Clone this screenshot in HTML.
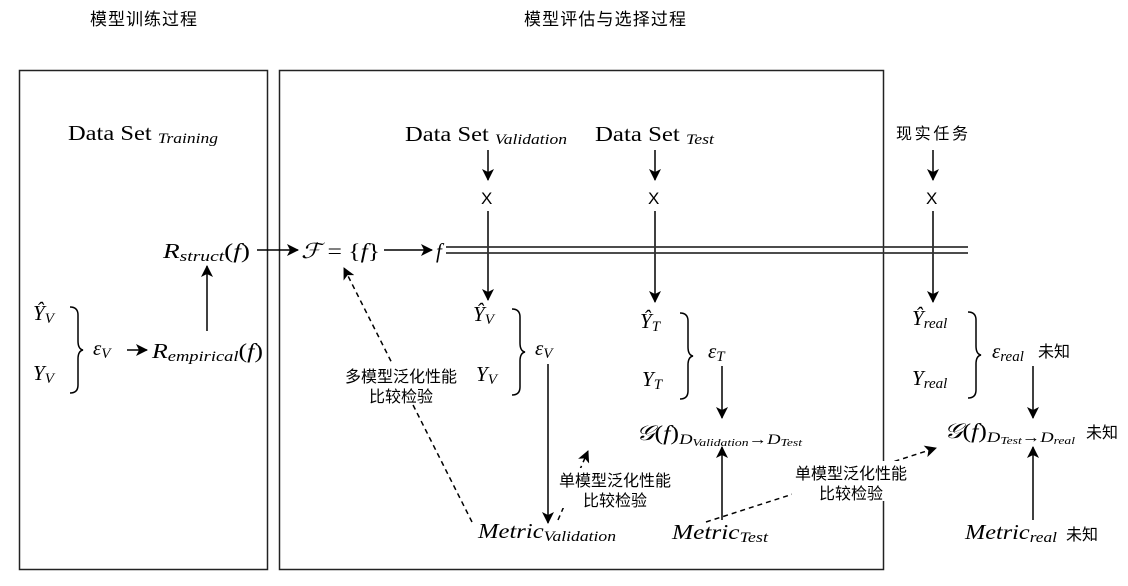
<!DOCTYPE html>
<html><head><meta charset="utf-8"><style>
html,body{margin:0;padding:0;background:#fff;width:1128px;height:586px;overflow:hidden}
svg{display:block}
.m{font-family:"Liberation Serif",serif;font-style:italic;font-size:21px;fill:#000}
.r{font-family:"Liberation Serif",serif;font-size:21px;fill:#000}
.s{font-size:15px}
.c{font-family:"Liberation Sans","Noto Sans CJK SC",sans-serif;font-size:16px;fill:#000}
.t{font-family:"Liberation Sans","Noto Sans CJK SC",sans-serif;font-size:17px;fill:#000}
.x{font-family:"Liberation Sans",sans-serif;font-size:17px;fill:#000}
</style></head><body>
<svg width="1128" height="586" viewBox="0 0 1128 586" xmlns="http://www.w3.org/2000/svg">
<defs>
<marker id="b" markerWidth="12" markerHeight="12" refX="11" refY="6" orient="auto" markerUnits="userSpaceOnUse"><path d="M0,0 L12,6 L0,12 L3,6 z" fill="#000"/></marker>
</defs>
<text class="t" x="90" y="25" textLength="107">模型训练过程</text>
<text class="t" x="524" y="25" textLength="162">模型评估与选择过程</text>
<rect x="19.5" y="70.5" width="248" height="499" fill="none" stroke="#222" stroke-width="1.5"/>
<rect x="279.5" y="70.5" width="604" height="499" fill="none" stroke="#222" stroke-width="1.5"/>

<text class="r" x="68" y="140" textLength="150" lengthAdjust="spacingAndGlyphs">Data Set <tspan class="m s" dy="3">Training</tspan></text>
<text class="r" x="405" y="141" textLength="162" lengthAdjust="spacingAndGlyphs">Data Set <tspan class="m s" dy="3">Validation</tspan></text>
<text class="r" x="595" y="141" textLength="119" lengthAdjust="spacingAndGlyphs">Data Set <tspan class="m s" dy="3">Test</tspan></text>
<text class="c" x="896" y="139" textLength="72">现实任务</text>

<g stroke="#000" stroke-width="1.5" fill="none">
<line x1="488" y1="150" x2="488" y2="180" marker-end="url(#b)"/>
<line x1="655" y1="150" x2="655" y2="180" marker-end="url(#b)"/>
<line x1="933" y1="150" x2="933" y2="180" marker-end="url(#b)"/>
<line x1="488" y1="211" x2="488" y2="300" marker-end="url(#b)"/>
<line x1="655" y1="211" x2="655" y2="302" marker-end="url(#b)"/>
<line x1="933" y1="211" x2="933" y2="302" marker-end="url(#b)"/>
<line x1="446" y1="247" x2="968" y2="247" stroke="#333" stroke-width="1.8"/>
<line x1="446" y1="253" x2="968" y2="253" stroke="#333" stroke-width="1.8"/>
<line x1="257" y1="250" x2="298" y2="250" marker-end="url(#b)"/>
<line x1="384" y1="250" x2="432" y2="250" marker-end="url(#b)"/>
<line x1="207" y1="331" x2="207" y2="266" marker-end="url(#b)"/>
<line x1="127" y1="350" x2="147" y2="350" marker-end="url(#b)"/>
<line x1="548" y1="364" x2="548" y2="523" marker-end="url(#b)"/>
<line x1="722" y1="366" x2="722" y2="418" marker-end="url(#b)"/>
<line x1="722" y1="520" x2="722" y2="447" marker-end="url(#b)"/>
<line x1="1033" y1="366" x2="1033" y2="418" marker-end="url(#b)"/>
<line x1="1033" y1="520" x2="1033" y2="447" marker-end="url(#b)"/>
<g stroke-dasharray="5,4">
<line x1="472" y1="522" x2="344" y2="268" marker-end="url(#b)"/>
<line x1="558" y1="520" x2="588" y2="451" marker-end="url(#b)"/>
<line x1="706" y1="522" x2="936" y2="448" marker-end="url(#b)"/>
</g>
<path d="M70,307 q8,0 8,8 v26 q0,8 5,9 q-5,1 -5,9 v26 q0,8 -8,8"/>
<path d="M512,309 q8,0 8,8 v26 q0,8 5,9 q-5,1 -5,9 v26 q0,8 -8,8"/>
<path d="M680,313 q8,0 8,8 v26 q0,8 5,9 q-5,1 -5,9 v26 q0,8 -8,8"/>
<path d="M968,312 q8,0 8,8 v26 q0,8 5,9 q-5,1 -5,9 v26 q0,8 -8,8"/>
</g>
<rect x="474" y="188" width="28" height="20" fill="#fff"/>
<rect x="641" y="188" width="28" height="20" fill="#fff"/>
<rect x="919" y="188" width="28" height="20" fill="#fff"/>
<text class="x" x="481" y="204">X</text>
<text class="x" x="648" y="204">X</text>
<text class="x" x="926" y="204">X</text>

<text class="m" x="163" y="258" textLength="87" lengthAdjust="spacingAndGlyphs">R<tspan class="s" dy="3">struct</tspan><tspan dy="-3" font-style="normal">(</tspan>f<tspan font-style="normal">)</tspan></text>
<text class="m" x="301" y="258" textLength="79" lengthAdjust="spacingAndGlyphs">ℱ <tspan font-style="normal">= {</tspan>f<tspan font-style="normal">}</tspan></text>
<text class="m" x="436" y="258">f</text>
<text class="m" x="152" y="358" textLength="111" lengthAdjust="spacingAndGlyphs">R<tspan class="s" dy="3">empirical</tspan><tspan dy="-3" font-style="normal">(</tspan>f<tspan font-style="normal">)</tspan></text>

<text class="m" x="33" y="320">Ŷ<tspan class="s" dy="3">V</tspan></text>
<text class="m" x="33" y="380">Y<tspan class="s" dy="3">V</tspan></text>
<text class="m" x="93" y="355">ε<tspan class="s" dy="3">V</tspan></text>

<text class="m" x="473" y="321">Ŷ<tspan class="s" dy="3">V</tspan></text>
<text class="m" x="476" y="381">Y<tspan class="s" dy="3">V</tspan></text>
<text class="m" x="535" y="355">ε<tspan class="s" dy="3">V</tspan></text>

<text class="m" x="640" y="328">Ŷ<tspan class="s" dy="3">T</tspan></text>
<text class="m" x="642" y="386">Y<tspan class="s" dy="3">T</tspan></text>
<text class="m" x="708" y="358">ε<tspan class="s" dy="3">T</tspan></text>

<text class="m" x="636" y="440" textLength="166" lengthAdjust="spacingAndGlyphs">𝒢<tspan font-style="normal">(</tspan>f<tspan font-style="normal">)</tspan><tspan class="s" dy="4">D</tspan><tspan font-size="11" dy="2">Validation</tspan><tspan class="s" dy="-2" font-style="normal">→</tspan><tspan class="s">D</tspan><tspan font-size="11" dy="2">Test</tspan></text>

<text class="m" x="912" y="325">Ŷ<tspan class="s" dy="3">real</tspan></text>
<text class="m" x="912" y="385">Y<tspan class="s" dy="3">real</tspan></text>
<text class="m" x="992" y="358">ε<tspan class="s" dy="3">real</tspan></text>
<text class="c" x="1038" y="357">未知</text>
<text class="m" x="944" y="438" textLength="131" lengthAdjust="spacingAndGlyphs">𝒢<tspan font-style="normal">(</tspan>f<tspan font-style="normal">)</tspan><tspan class="s" dy="4">D</tspan><tspan font-size="11" dy="2">Test</tspan><tspan class="s" dy="-2" font-style="normal">→</tspan><tspan class="s">D</tspan><tspan font-size="11" dy="2">real</tspan></text>
<text class="c" x="1086" y="438">未知</text>

<text class="m" x="478" y="538" textLength="138" lengthAdjust="spacingAndGlyphs">Metric<tspan class="s" dy="3">Validation</tspan></text>
<text class="m" x="672" y="539" textLength="96" lengthAdjust="spacingAndGlyphs">Metric<tspan class="s" dy="3">Test</tspan></text>
<text class="m" x="965" y="539" textLength="92" lengthAdjust="spacingAndGlyphs">Metric<tspan class="s" dy="3">real</tspan></text>
<text class="c" x="1066" y="540">未知</text>

<rect x="341" y="364" width="120" height="40" fill="#fff"/>
<text class="c" x="401" y="382" text-anchor="middle">多模型泛化性能</text>
<text class="c" x="401" y="402" text-anchor="middle">比较检验</text>
<rect x="556" y="468" width="118" height="40" fill="#fff"/>
<text class="c" x="615" y="486" text-anchor="middle">单模型泛化性能</text>
<text class="c" x="615" y="506" text-anchor="middle">比较检验</text>
<rect x="792" y="461" width="118" height="40" fill="#fff"/>
<text class="c" x="851" y="479" text-anchor="middle">单模型泛化性能</text>
<text class="c" x="851" y="499" text-anchor="middle">比较检验</text>
</svg>
</body></html>
